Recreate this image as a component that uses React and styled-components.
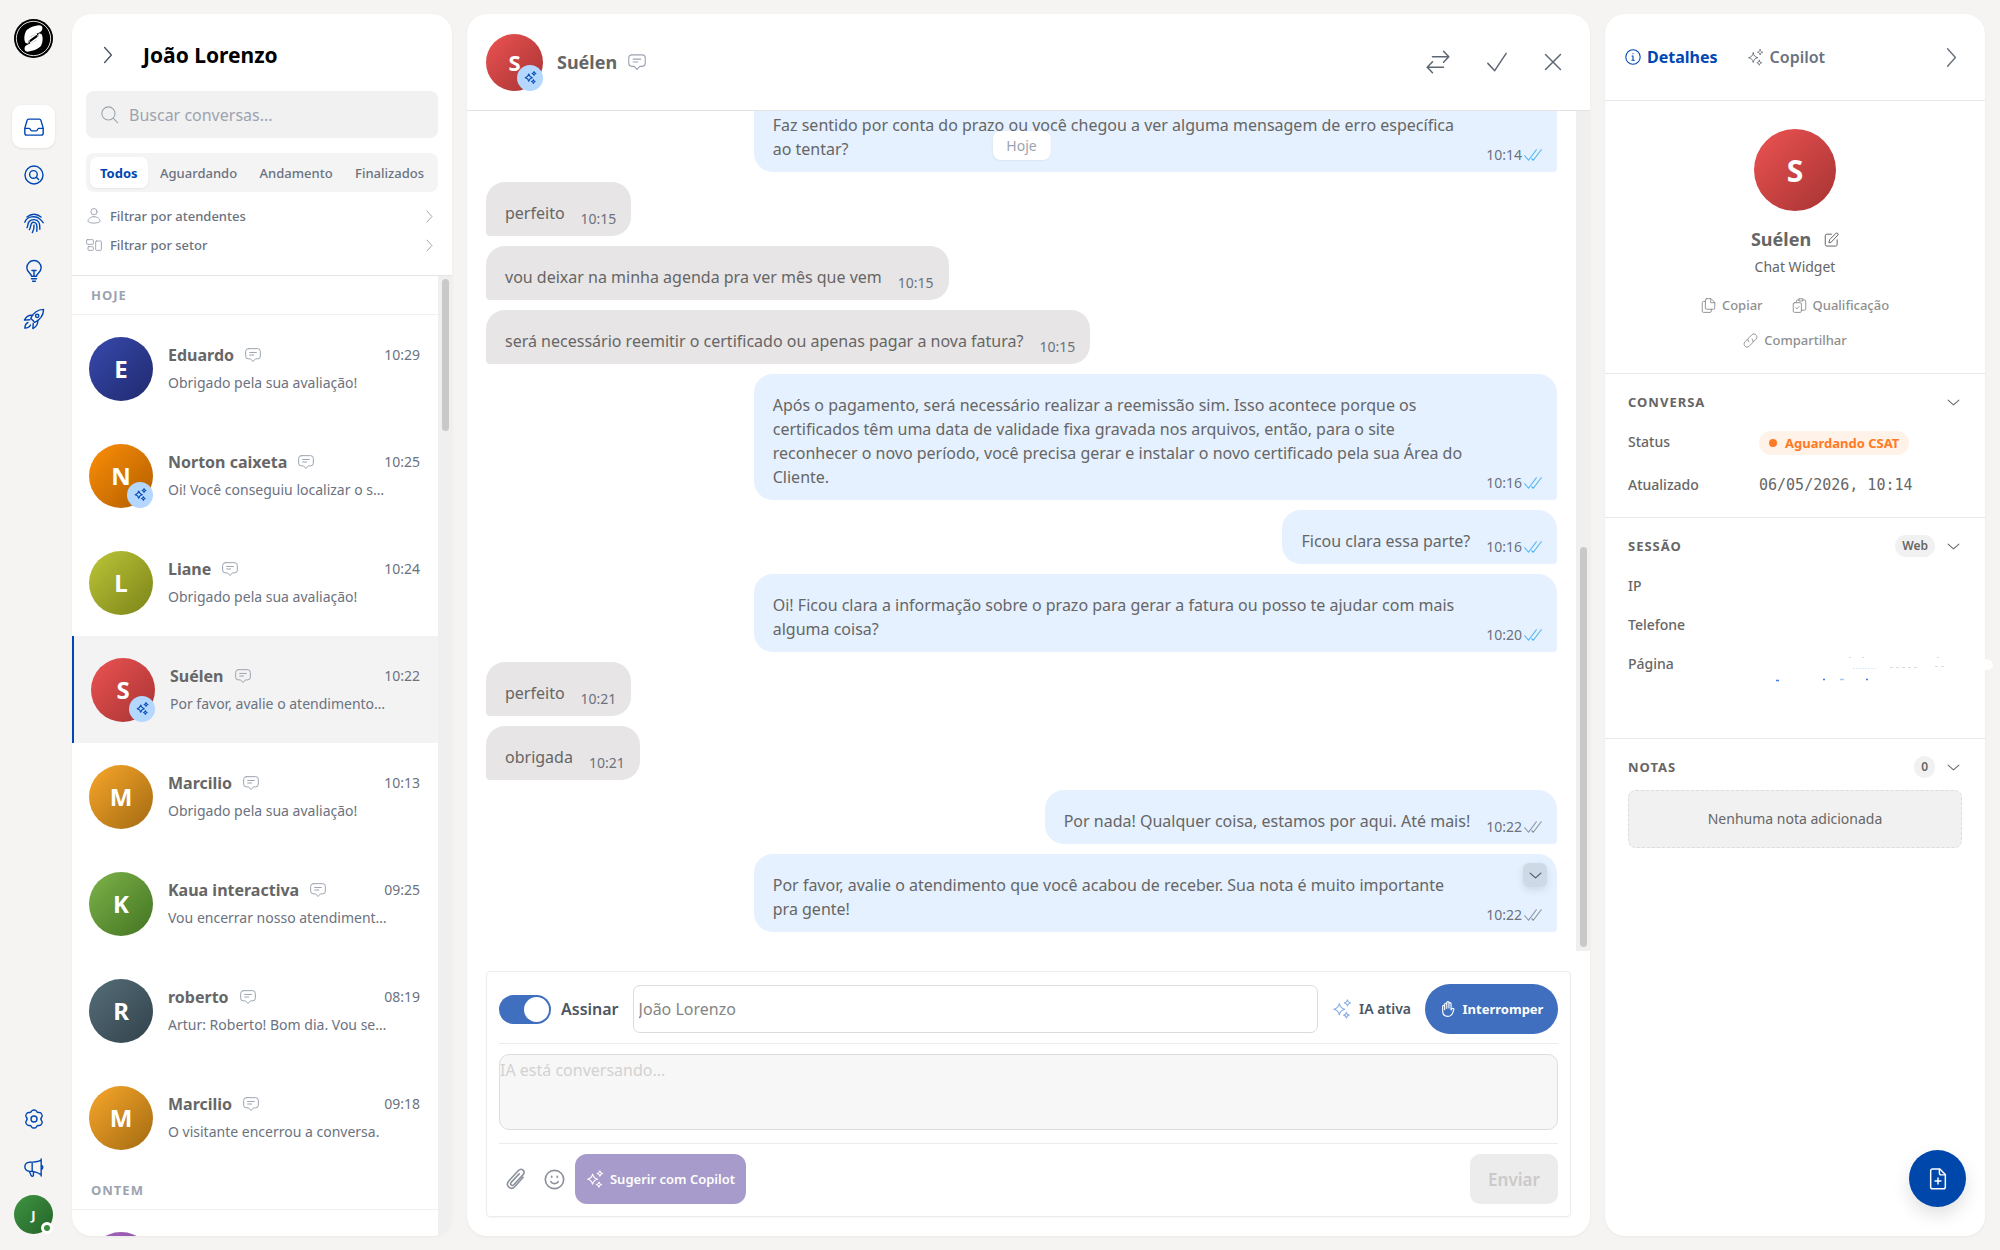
import React from "react";
import styled, { createGlobalStyle, css } from "styled-components";

const Global = createGlobalStyle`
  *, *::before, *::after { box-sizing: border-box; }
  body { margin: 0; background: #f5f4f2; }
  body, button, input, textarea {
    font-family: "Noto Sans", "Open Sans", "Liberation Sans", sans-serif;
  }
  button { border: 0; padding: 0; background: none; color: inherit; cursor: pointer; }
  h1, h2, h3, p, dl, dd, dt, ul { margin: 0; padding: 0; }
  ul { list-style: none; }
`;

/* ---------- icons ---------- */

const Svg = styled.svg`
  display: block;
  flex: none;
  width: ${(p) => p.$size}px;
  height: ${(p) => p.$size}px;
  fill: none;
  stroke: currentColor;
  stroke-width: ${(p) => p.$w};
  stroke-linecap: round;
  stroke-linejoin: round;
`;

const shapes = {
  inbox: (
    <>
      <path d="M5.6 2.500h12.800a2 2 0 0 1 1.900 1.500l2.700 9.300v6.200a2.200 2.200 0 0 1-2.200 2.200H3.200a2.200 2.200 0 0 1-2.200-2.200v-6.200L3.700 4a2 2 0 0 1 1.900-1.500z" />
      <path d="M1.300 13.600h5.200c1.200 0 1.200 3 2.800 3h5.400c1.600 0 1.600-3 2.800-3h5.200" />
    </>
  ),
  searchCircle: (
    <>
      <circle cx="12" cy="12" r="10.800" />
      <circle cx="11.300" cy="11.300" r="4.600" />
      <path d="m14.800 14.800 2.700 2.700" />
    </>
  ),
  finger: (
    <>
      <path d="M3.600 4.700C8.500.3 15.500.3 20.400 4.700" />
      <path d="M1 11C3.500 3.800 14 2.600 19 7.200c1.500 1.300 2.800 2.800 4 4.400" />
      <path d="M3.600 17.500c1.500-2.500.5-4.500 2.400-7 2.800-3.600 9.500-3.300 11.800.6 1.200 2.100 1.300 5 1.200 8.400" />
      <path d="M6.500 20c2-3 1-5.500 2.500-7.500s5-1.700 6 1c.7 2 .7 5.500.3 8.500" />
      <path d="M12 14.500c.3 3.500-.3 6-2 9" />
    </>
  ),
  bulb: (
    <>
      <path d="M9 18.200c0-3-5.600-4.500-5.600-10A8.500 8.500 0 0 1 12-.5a8.500 8.500 0 0 1 8.600 8.700c0 5.500-5.600 7-5.600 10z" />
      <path d="M9 21.200h6M10.300 24.200h3.400M12 18v-6M9.500 11.500h5" />
    </>
  ),
  rocket: (
    <>
      <path d="M23.500.500c-7 .2-12 3.500-15.500 10.700L12.800 16C20 12.500 23.300 7.500 23.500.500z" />
      <circle cx="15.800" cy="8.200" r="2" />
      <path d="M10.300 7.600C6 7 3 8.500.500 13.300l6.500-.4M16.400 13.700c.6 4.300-.9 7.300-5.700 9.800l.4-6.500" />
      <path d="M4.700 16.200C2.200 17.300 1.200 19.500 1 23c3.500-.2 5.700-1.200 6.800-3.700" />
    </>
  ),
  gear: (
    <>
      <circle cx="12" cy="12" r="3.600" />
      <path d="M12 1.200c1.200 0 2.400.3 2.800 1.300.5 1.200 1.400 2 3 1.700 1.800-.3 2.700.6 3.500 2.100.9 1.500.9 2.600-.1 3.600-1.100 1.200-1.100 3 0 4.200 1 1 1 2.100.1 3.600-.8 1.500-1.700 2.400-3.500 2.100-1.600-.3-2.500.5-3 1.700-.4 1-1.600 1.300-2.800 1.300s-2.400-.3-2.800-1.300c-.5-1.200-1.400-2-3-1.700-1.800.3-2.700-.6-3.500-2.100-.9-1.500-.9-2.600.1-3.600 1.100-1.200 1.100-3 0-4.200-1-1-1-2.100-.1-3.600.8-1.500 1.700-2.400 3.500-2.100 1.600.3 2.500-.5 3-1.700.4-1 1.600-1.300 2.800-1.300z" />
    </>
  ),
  megaphone: (
    <path d="M20.600 2.500c-4 2-7.600 2.600-14.200 2.600a5.300 5.300 0 0 0-5.400 5.400 5.300 5.300 0 0 0 5.400 5.300c6.600 0 10.200 1.500 14.200 4.400M20.600 1.200v20.400M20.600 8.500c2.600.4 2.600 4.800 0 5.300M9.800 5.200v10.600M6.400 15.800l2 5c.6 1.600 3.200 1.300 3-.6l-.3-4" />
  ),
  chevronRight: <path d="m7.500 2 9 10-9 10" />,
  chevronDown: <path d="m2 7.500 10 9 10-9" />,
  search: (
    <>
      <circle cx="10.500" cy="10.500" r="9.300" />
      <path d="m17.500 17.500 6 6" />
    </>
  ),
  person: (
    <>
      <circle cx="12" cy="5.500" r="4.700" />
      <path d="M12 13c5 0 9 2.900 9 6.600 0 4-18 4-18 0C3 15.900 7 13 12 13z" />
    </>
  ),
  sectors: (
    <>
      <rect x="1" y="4" width="10" height="7" rx="1" />
      <rect x="3" y="14.500" width="8" height="5.500" rx="1" />
      <rect x="14.500" y="6" width="8.500" height="14" rx="1" />
    </>
  ),
  chat: (
    <>
      <path d="M5 2.500h14a4 4 0 0 1 4 4v7.300a4 4 0 0 1-4 4h-3.300L12 21.800l-3.700-4H5a4 4 0 0 1-4-4V6.500a4 4 0 0 1 4-4z" />
      <path d="M7 8.200h10M7 12h6" />
    </>
  ),
  sparkles: (
    <>
      <path d="M8.800 5.500c.9 4.200 2.500 5.900 6.700 6.800-4.200.9-5.800 2.500-6.700 6.700-.9-4.200-2.500-5.800-6.700-6.700 4.200-.9 5.800-2.600 6.700-6.800z" />
      <path d="M18.500 1c.4 2.200 1.400 3.100 3.600 3.600-2.200.4-3.200 1.400-3.600 3.600-.4-2.200-1.400-3.200-3.600-3.600 2.200-.5 3.200-1.400 3.600-3.600zM17.300 16c.4 2.200 1.200 3 3.400 3.400-2.200.4-3 1.300-3.400 3.500-.4-2.200-1.200-3.100-3.400-3.500 2.200-.4 3-1.200 3.400-3.400z" />
    </>
  ),
  transfer: (
    <path d="M6.500 6.800h16.300M17.500 1.200l5.300 5.600-5.300 5.500M17.500 17.200H1.200M6.500 11.700l-5.300 5.500 5.300 5.600" />
  ),
  check: <path d="m2 13.500 7.500 8L22 2.500" />,
  close: <path d="m2 2 20 20M22 2 2 22" />,
  doubleCheck: <path d="m1 13 5 6L16.500 5M10.500 17l1.800 2L23 5" />,
  info: (
    <>
      <circle cx="12" cy="12" r="10.800" />
      <path d="M10.500 10.500H12v6.500M10.200 17h3.800M12 6.800v.4" />
    </>
  ),
  edit: (
    <>
      <path d="M12 3.500H4.500A2.500 2.500 0 0 0 2 6v14a2.500 2.500 0 0 0 2.500 2.500h14A2.500 2.500 0 0 0 21 20v-7.500" />
      <path d="M8 16.800l1-4.600L19.500 1.700c1.500-1 4 1.300 2.900 2.900L12.200 15.600z" />
    </>
  ),
  copy: (
    <>
      <path d="M9 1h7l6 6v9a2 2 0 0 1-2 2H9a2 2 0 0 1-2-2V3a2 2 0 0 1 2-2z" />
      <path d="M15.500 1v6.500H22M7 5.500H4a2 2 0 0 0-2 2V21a2 2 0 0 0 2 2h10.500a2 2 0 0 0 2-2v-3" />
    </>
  ),
  clipboard: (
    <>
      <path d="M4 7.500h9a2 2 0 0 1 2 2V21a2 2 0 0 1-2 2H4a2 2 0 0 1-2-2V9.500a2 2 0 0 1 2-2z" />
      <path d="M7 7.500V5a2 2 0 0 1 2-2h2.500M17.500 3H20a2 2 0 0 1 2 2v12.500a2 2 0 0 1-2 2h-5M11.500 1.200h6v3.600h-6zM5.800 15.500l2 2 3.600-4" />
    </>
  ),
  link: (
    <>
      <path d="M9.500 14.500C7 12 7.500 9.500 9.500 7.500l4.700-4.700c4-4 11 2 6.700 7l-4 4.100" />
      <path d="M14.500 9.500c2.500 2.500 2 5 0 7l-4.700 4.700c-4 4-11-2-6.700-7l4-4.100" />
    </>
  ),
  hand: (
    <path d="M7 13V5a1.600 1.600 0 0 1 3.200 0v6M10.200 10.500v-8a1.600 1.600 0 0 1 3.200 0v8M13.400 10.500V4a1.600 1.600 0 0 1 3.200 0v9.500l1.500-2c1-1.300 3.400-.3 2.700 1.500l-1.500 4c-1.200 3.700-3.500 6-7.500 6-5 0-7.800-3-7.800-8V8a1.500 1.500 0 0 1 3 0" />
  ),
  clip: (
    <path d="m19.800 10.200-9.300 10.200c-3.900 4.200-10.800-.8-6.400-6.200L14.600 2.800c3.300-3.400 8.400.7 5.200 4.400L9.600 18.200c-2 2-4.700-.4-2.900-2.500l8.800-9.300" />
  ),
  smile: (
    <>
      <circle cx="12" cy="12" r="10.500" />
      <path d="M7.800 14.500c1.600 3 6.800 3 8.400 0M8.800 8.400v1M15.200 8.400v1" />
    </>
  ),
  filePlus: (
    <>
      <path d="M6 1.200h8l6 6v13.500a2 2 0 0 1-2 2H6a2 2 0 0 1-2-2V3.200a2 2 0 0 1 2-2z" />
      <path d="M13.500 1.500v4a2 2 0 0 0 2 2H20M12 11v6.500M8.800 14.200h6.400" />
    </>
  ),
};

const Icon = ({ name, size = 20, w = 1.5 }) => (
  <Svg viewBox="0 0 24 24" $size={size} $w={w} overflow="visible" aria-hidden="true">
    {shapes[name]}
  </Svg>
);

const half =
  "M-8.500 4C-10 1-9.500-4-8-7-6-10.500 0-13 6-13.500 9.500-13.500 10-9.500 8-7.500 5-5.500 1-4-1.500-2.500-4.500-1-5 2-5 5-6.500 5.500-7.500 5-8.500 4z";

const Logo = () => (
  <svg width="39" height="39" viewBox="-20 -20 40 40" aria-label="Logo" role="img">
    <circle r="20" fill="#000" />
    <circle r="17.600" fill="none" stroke="#fff" strokeWidth="0.900" />
    <path d={half} fill="#fff" />
    <path d={half} fill="#fff" transform="rotate(180)" />
    <path d="M-4.500 2.500 4.500-2.500" stroke="#fff" strokeWidth="6" />
    <path d="M-3 2.200 3-2.200" stroke="#000" strokeWidth="2.400" strokeLinecap="round" />
  </svg>
);

/* ---------- shared parts ---------- */

const Shell = styled.div`
  display: flex;
  gap: 15px;
  height: 100vh;
  padding: 14px 15px 14px 0;
  overflow: hidden;
  color: #666;
  background: #f5f4f2;
`;

const panel = css`
  display: flex;
  flex-direction: column;
  min-width: 0;
  overflow: hidden;
  background: #fff;
  border-radius: 20px;
  box-shadow: 0 1px 3px rgba(0, 0, 0, 0.05);
`;

const Avatar = styled.span`
  position: relative;
  display: flex;
  flex: none;
  align-items: center;
  justify-content: center;
  width: ${(p) => p.$size}px;
  height: ${(p) => p.$size}px;
  border-radius: 50%;
  background: linear-gradient(135deg, ${(p) => p.$from} 10%, ${(p) => p.$to} 90%);
  color: #fff;
  font-size: ${(p) => p.$font}px;
  font-weight: 700;
`;

const AiBadge = styled.span`
  position: absolute;
  right: 0;
  bottom: 0;
  display: flex;
  align-items: center;
  justify-content: center;
  width: 26px;
  height: 26px;
  border-radius: 50%;
  background: #b3d7ff;
  color: #0b4fb5;
`;

const Scroller = styled.div`
  display: flex;
  flex: 1;
  min-height: 0;
`;

const ScrollTrack = styled.div`
  flex: none;
  width: 14px;
  padding: 3px 3px 4px 4px;
  background: #efefef;
  display: flex;
  flex-direction: column;
  justify-content: ${(p) => (p.$end ? "flex-end" : "flex-start")};
`;

const ScrollThumb = styled.div`
  height: ${(p) => p.$h}%;
  border-radius: 4px;
  background: #c9c9c9;
`;

/* ---------- navigation rail ---------- */

const Rail = styled.nav`
  display: flex;
  flex: none;
  flex-direction: column;
  align-items: center;
  justify-content: space-between;
  width: 57px;
  padding: 5px 0 2px 10px;
`;

const RailGroup = styled.div`
  display: flex;
  flex-direction: column;
  align-items: center;
  gap: ${(p) => p.$gap}px;
`;

const RailLogo = styled.a`
  display: flex;
  margin-bottom: 42px;
`;

const RailButton = styled.button`
  display: flex;
  align-items: center;
  justify-content: center;
  width: 43px;
  height: 43px;
  border-radius: 10px;
  color: #0047b3;
  ${(p) => p.$active && css`
    background: #fff;
    box-shadow: 0 1px 3px rgba(0, 0, 0, 0.08);
  `}
`;

const OnlineDot = styled.span`
  position: absolute;
  right: 0;
  bottom: 0;
  width: 12px;
  height: 12px;
  border: 3px solid #fff;
  border-radius: 50%;
  background: #388e3c;
`;

/* ---------- conversation list ---------- */

const ListPanel = styled.section`
  ${panel}
  flex: none;
  width: 380px;
`;

const ListHead = styled.header`
  display: flex;
  flex-direction: column;
  padding: 24px 14px 20px;
  border-bottom: 1px solid #e5e5e5;
`;

const Owner = styled.div`
  display: flex;
  align-items: center;
  gap: 26px;
  height: 34px;
  padding-left: 13px;
  color: #4b5563;
`;

const OwnerName = styled.h1`
  color: #000;
  font-size: 21px;
  line-height: 34px;
  font-weight: 700;
`;

const SearchBox = styled.label`
  display: flex;
  align-items: center;
  gap: 9px;
  height: 47px;
  margin: 19px 0 15px;
  padding: 0 15px;
  border-radius: 8px;
  background: #f1f1f1;
  color: #9ca3af;
`;

const SearchInput = styled.input`
  flex: 1;
  min-width: 0;
  border: 0;
  outline: 0;
  background: none;
  font-size: 16px;
  line-height: 24px;
  &::placeholder { color: #9ca3af; opacity: 1; }
`;

const Tabs = styled.div`
  display: flex;
  justify-content: space-between;
  height: 39px;
  padding: 4px;
  border-radius: 8px;
  background: #f4f4f4;
`;

const Tab = styled.button`
  padding: 0 10px;
  border-radius: 7px;
  font-size: 13px;
  line-height: 20px;
  font-weight: 500;
  color: #6b7280;
  ${(p) => p.$active && css`
    background: #fff;
    color: #0047b3;
    font-weight: 700;
    box-shadow: 0 1px 2px rgba(0, 0, 0, 0.06);
  `}
`;

const Filters = styled.div`
  display: flex;
  flex-direction: column;
  gap: 9px;
  margin-top: 14px;
`;

const Filter = styled.button`
  display: flex;
  align-items: center;
  gap: 8px;
  height: 20px;
  padding-right: 2px;
  color: #9ca3af;
  font-size: 13px;
  line-height: 20px;
  font-weight: 500;
  span { flex: 1; text-align: left; color: #6b7280; }
`;

const ListBody = styled.div`
  flex: 1;
  min-width: 0;
  overflow: hidden;
`;

const DayTitle = styled.h2`
  height: 39px;
  padding-left: 19px;
  border-bottom: 1px solid #f0f0f0;
  color: #9ca3af;
  font-size: 13px;
  line-height: 38px;
  font-weight: 700;
  letter-spacing: 1px;
`;

const Row = styled.a`
  display: flex;
  align-items: center;
  gap: 15px;
  height: 107px;
  padding: 0 18px 0 17px;
  color: #6b7280;
  text-decoration: none;
  ${(p) => p.$active && css`
    border-left: 2px solid #0047b3;
    background: #f3f3f3;
  `}
`;

const RowBody = styled.span`
  display: flex;
  flex: 1;
  flex-direction: column;
  gap: 6px;
  min-width: 0;
`;

const RowTop = styled.span`
  display: flex;
  align-items: center;
  gap: 11px;
  line-height: 22px;
  color: #9ca3af;
`;

const RowName = styled.strong`
  color: #666;
  font-size: 16px;
  font-weight: 700;
`;

const RowTime = styled.time`
  margin-left: auto;
  color: #6b7280;
  font-size: 14px;
`;

const Preview = styled.span`
  overflow: hidden;
  font-size: 14px;
  line-height: 22px;
  white-space: nowrap;
`;

/* ---------- chat ---------- */

const ChatPanel = styled.main`
  ${panel}
  flex: 1;
`;

const ChatHead = styled.header`
  display: flex;
  flex: none;
  align-items: center;
  gap: 14px;
  height: 97px;
  padding: 0 28px 0 19px;
  border-bottom: 1px solid #e3e3e3;
`;

const Contact = styled.h2`
  display: flex;
  align-items: center;
  gap: 11px;
  color: #666;
  font-size: 18px;
  line-height: 26px;
  font-weight: 700;
  svg { color: #9ca3af; }
`;

const HeadActions = styled.div`
  display: flex;
  align-items: center;
  gap: 36px;
  margin-left: auto;
  color: #5d6673;
`;

const Messages = styled.div`
  position: relative;
  display: flex;
  flex: 1;
  flex-direction: column;
  justify-content: flex-end;
  gap: 10px;
  min-width: 0;
  padding: 0 19px 19px;
  overflow: hidden;
`;

const Bubble = styled.article`
  position: relative;
  display: flex;
  flex: none;
  align-items: flex-end;
  align-self: ${(p) => (p.$out ? "flex-end" : "flex-start")};
  gap: 16px;
  max-width: 75%;
  padding: 19px 15px 8px 19px;
  border-radius: ${(p) => (p.$out ? "19px 19px 4px 19px" : "19px 19px 19px 4px")};
  background: ${(p) => (p.$out ? "#e5f1ff" : "#e7e5e5")};
`;

const BubbleText = styled.p`
  flex: 1;
  margin-bottom: 3px;
  color: #666;
  font-size: 16px;
  line-height: 24px;
`;

const BubbleMeta = styled.span`
  display: flex;
  align-items: center;
  gap: 2px;
  color: #6b7280;
  font-size: 14px;
  line-height: 18px;
  svg { color: ${(p) => (p.$read ? "#4db6f0" : "#8a93a3")}; }
`;

const BubbleMenu = styled.button`
  position: absolute;
  top: 9px;
  right: 10px;
  display: flex;
  align-items: center;
  justify-content: center;
  width: 24px;
  height: 24px;
  border-radius: 6px;
  background: #cddae6;
  color: #4b5563;
  box-shadow: 0 3px 8px rgba(0, 0, 0, 0.1);
`;

const DayPill = styled.span`
  position: absolute;
  top: 20px;
  left: 50%;
  transform: translateX(-50%);
  padding: 4px 14px;
  border-radius: 8px;
  background: #fff;
  color: #9ca3af;
  font-size: 14px;
  line-height: 21px;
  box-shadow: 0 1px 2px rgba(0, 0, 0, 0.05);
`;

const ComposerWrap = styled.div`
  flex: none;
  padding: 20px 19px 19px;
`;

const Composer = styled.form`
  display: flex;
  flex-direction: column;
  padding: 12px;
  border: 1px solid #ececec;
  border-radius: 4px;
  box-shadow: 0 1px 2px rgba(0, 0, 0, 0.04);
`;

const SignRow = styled.div`
  display: flex;
  align-items: center;
  padding-bottom: 9px;
  border-bottom: 1px solid #ececec;
`;

const SignLabel = styled.label`
  display: flex;
  align-items: center;
  gap: 10px;
  color: #4b5563;
  font-size: 16px;
  line-height: 24px;
  font-weight: 600;
`;

const Toggle = styled.input`
  appearance: none;
  display: flex;
  align-items: center;
  justify-content: flex-end;
  width: 52px;
  height: 29px;
  margin: 0;
  padding: 2px;
  border-radius: 15px;
  background: #3f6fbe;
  &::before {
    content: "";
    width: 25px;
    height: 25px;
    border-radius: 50%;
    background: #fff;
  }
`;

const SignInput = styled.input`
  flex: 1;
  min-width: 0;
  height: 48px;
  margin: 0 14px;
  padding: 0 5px;
  border: 1px solid #dcdcdc;
  border-radius: 7px;
  color: #858585;
  font-size: 16px;
`;

const AiState = styled.span`
  display: flex;
  align-items: center;
  gap: 7px;
  margin-right: 14px;
  color: #4b5563;
  font-size: 14px;
  line-height: 20px;
  font-weight: 600;
  svg { color: #8fb1e6; }
`;

const StopButton = styled.button`
  display: flex;
  align-items: center;
  justify-content: center;
  gap: 7px;
  width: 133px;
  height: 50px;
  border-radius: 25px;
  background: #3f6fbe;
  color: #fff;
  font-size: 13px;
  line-height: 20px;
  font-weight: 700;
`;

const Draft = styled.textarea`
  display: block;
  height: 76px;
  margin: 10px 0 13px;
  padding: 4px 0;
  resize: none;
  border: 1px solid #dcdcdc;
  border-radius: 10px;
  background: #f7f7f7;
  font-size: 16px;
  line-height: 22px;
  &::placeholder { color: #d2d2d2; opacity: 1; }
`;

const SendRow = styled.div`
  display: flex;
  align-items: center;
  gap: 4px;
  padding-top: 10px;
  border-top: 1px solid #ececec;
`;

const ToolButton = styled.button`
  display: flex;
  align-items: center;
  justify-content: center;
  width: 34px;
  height: 34px;
  color: #8b919b;
`;

const SuggestButton = styled.button`
  display: flex;
  align-items: center;
  justify-content: center;
  gap: 6px;
  width: 171px;
  height: 50px;
  border-radius: 12px;
  background: #a69bcb;
  color: #fff;
  font-size: 13px;
  line-height: 20px;
  font-weight: 600;
`;

const SendButton = styled.button`
  width: 88px;
  height: 50px;
  margin-left: auto;
  border-radius: 10px;
  background: #ececec;
  color: #cacaca;
  font-size: 17px;
  font-weight: 600;
`;

/* ---------- details ---------- */

const DetailsPanel = styled.aside`
  ${panel}
  flex: none;
  width: 380px;
  overflow: visible;
`;

const DetailsHead = styled.header`
  display: flex;
  flex: none;
  align-items: center;
  gap: 29px;
  height: 87px;
  padding: 0 23px 0 20px;
  border-bottom: 1px solid #e5e7eb;
  color: #6b7280;
`;

const DetailsTab = styled.button`
  display: flex;
  align-items: center;
  gap: 6px;
  color: ${(p) => (p.$active ? "#0047b3" : "#6b7280")};
  font-size: 16px;
  line-height: 24px;
  font-weight: ${(p) => (p.$active ? 700 : 600)};
`;

const Collapse = styled.button`
  margin-left: auto;
`;

const Profile = styled.div`
  display: flex;
  flex-direction: column;
  align-items: center;
  padding: 28px 60px 23px;
  border-bottom: 1px solid #e8e8e8;
`;

const ProfileName = styled.h2`
  display: flex;
  align-items: center;
  gap: 13px;
  margin-top: 16px;
  color: #666;
  font-size: 18px;
  line-height: 24px;
  font-weight: 700;
`;

const Channel = styled.p`
  margin-top: 6px;
  font-size: 14px;
  line-height: 20px;
`;

const ProfileActions = styled.div`
  display: flex;
  flex-wrap: wrap;
  justify-content: center;
  gap: 15px 29px;
  margin-top: 18px;
`;

const ProfileAction = styled.button`
  display: flex;
  align-items: center;
  gap: 6px;
  color: #8f8f8f;
  font-size: 13px;
  line-height: 20px;
  font-weight: 500;
`;

const Section = styled.section`
  padding: 17px 23px 20px;
  border-bottom: ${(p) => (p.$last ? "0" : "1px solid #e8e8e8")};
`;

const SectionHead = styled.div`
  display: flex;
  align-items: center;
  gap: 12px;
  height: 22px;
  padding-right: 2px;
`;

const SectionTitle = styled.h3`
  flex: 1;
  font-size: 13px;
  line-height: 20px;
  font-weight: 700;
  letter-spacing: 1px;
`;

const Tag = styled.span`
  padding: 0 7px;
  border-radius: 11px;
  background: #f1f1f1;
  font-size: 12px;
  line-height: 22px;
  font-weight: 600;
`;

const Facts = styled.dl`
  display: flex;
  flex-direction: column;
  gap: ${(p) => p.$gap}px;
  margin-top: 17px;
`;

const Fact = styled.div`
  display: flex;
  min-height: ${(p) => p.$min || 24}px;
  font-size: 14px;
  line-height: 24px;
  dt { flex: none; width: 131px; font-weight: 500; }
  dd { flex: 1; }
`;

const Status = styled.span`
  display: inline-flex;
  align-items: center;
  gap: 8px;
  padding: 0 10px;
  border-radius: 12px;
  background: #fff2e8;
  color: #ff7a24;
  font-size: 13px;
  line-height: 24px;
  font-weight: 700;
  &::before {
    content: "";
    width: 8px;
    height: 8px;
    border-radius: 50%;
    background: currentColor;
  }
`;

const Stamp = styled.time`
  font-family: "DejaVu Sans Mono", "Liberation Mono", monospace;
  font-size: 15px;
`;

const EmptyNotes = styled.p`
  margin-top: 12px;
  padding: 17px;
  border: 1px dashed #dcdcdc;
  border-radius: 8px;
  background: #f1f1f1;
  font-size: 14px;
  line-height: 22px;
  text-align: center;
`;

const Fab = styled.button`
  position: fixed;
  right: 34px;
  bottom: 43px;
  display: flex;
  align-items: center;
  justify-content: center;
  width: 57px;
  height: 57px;
  border-radius: 50%;
  background: #0047ab;
  color: #fff;
  box-shadow: 0 8px 18px rgba(0, 0, 0, 0.12);
`;

/* ---------- data ---------- */

const red = ["#e5504f", "#ad3636"];
const amber = ["#f0a128", "#ab7014"];

const today = [
  { name: "Eduardo", text: "Obrigado pela sua avaliação!", time: "10:29", c: ["#3546a6", "#222d75"] },
  { name: "Norton caixeta", text: "Oi! Você conseguiu localizar o s…", time: "10:25", c: ["#f58a07", "#b86200"], ai: true },
  { name: "Liane", text: "Obrigado pela sua avaliação!", time: "10:24", c: ["#b6bf34", "#828a1c"] },
  { name: "Suélen", text: "Por favor, avalie o atendimento…", time: "10:22", c: red, ai: true, active: true },
  { name: "Marcilio", text: "Obrigado pela sua avaliação!", time: "10:13", c: amber },
  { name: "Kaua interactiva", text: "Vou encerrar nosso atendiment…", time: "09:25", c: ["#77ad46", "#497a26"] },
  { name: "roberto", text: "Artur: Roberto! Bom dia. Vou se…", time: "08:19", c: ["#526974", "#354750"] },
  { name: "Marcilio", text: "O visitante encerrou a conversa.", time: "09:18", c: amber },
];

const yesterday = [{ name: "", text: "", time: "", c: ["#a564bd", "#7b3f94"] }];

const messages = [
  { out: true, read: true, time: "10:14", text: "Faz sentido por conta do prazo ou você chegou a ver alguma mensagem de erro específica ao tentar?" },
  { time: "10:15", text: "perfeito" },
  { time: "10:15", text: "vou deixar na minha agenda pra ver mês que vem" },
  { time: "10:15", text: "será necessário reemitir o certificado ou apenas pagar a nova fatura?" },
  { out: true, read: true, time: "10:16", text: "Após o pagamento, será necessário realizar a reemissão sim. Isso acontece porque os certificados têm uma data de validade fixa gravada nos arquivos, então, para o site reconhecer o novo período, você precisa gerar e instalar o novo certificado pela sua Área do Cliente." },
  { out: true, read: true, time: "10:16", text: "Ficou clara essa parte?" },
  { out: true, read: true, time: "10:20", text: "Oi! Ficou clara a informação sobre o prazo para gerar a fatura ou posso te ajudar com mais alguma coisa?" },
  { time: "10:21", text: "perfeito" },
  { time: "10:21", text: "obrigada" },
  { out: true, time: "10:22", text: "Por nada! Qualquer coisa, estamos por aqui. Até mais!" },
  { out: true, time: "10:22", menu: true, text: "Por favor, avalie o atendimento que você acabou de receber. Sua nota é muito importante pra gente!" },
];

const nav = [
  ["inbox", "Conversas"],
  ["searchCircle", "Buscar"],
  ["finger", "Visitantes"],
  ["bulb", "Ideias"],
  ["rocket", "Campanhas"],
];

/* ---------- views ---------- */

const Conversation = ({ item }) => (
  <li>
    <Row href="#" $active={item.active}>
      <Avatar $size={64} $font={24} $from={item.c[0]} $to={item.c[1]}>
        {item.name.charAt(0).toUpperCase()}
        {item.ai && <AiBadge><Icon name="sparkles" size={13} w={2} /></AiBadge>}
      </Avatar>
      <RowBody>
        <RowTop>
          <RowName>{item.name}</RowName>
          <Icon name="chat" size={16} w={1.5} />
          <RowTime>{item.time}</RowTime>
        </RowTop>
        <Preview>{item.text}</Preview>
      </RowBody>
    </Row>
  </li>
);

const Message = ({ m }) => (
  <Bubble $out={m.out}>
    <BubbleText>{m.text}</BubbleText>
    <BubbleMeta $read={m.read}>
      <time>{m.time}</time>
      {m.out && <Icon name="doubleCheck" size={18} w={1.5} />}
    </BubbleMeta>
    {m.menu && (
      <BubbleMenu type="button" aria-label="Opções da mensagem">
        <Icon name="chevronDown" size={13} w={2} />
      </BubbleMenu>
    )}
  </Bubble>
);

const PageTrace = () => (
  <svg width="235" height="58" viewBox="0 0 235 58" overflow="visible" aria-hidden="true">
    <path d="M226 7q8 1 8 6t-8 5z" fill="#fff" />
    <path d="M17 28.500h3M64 27.500h2M107 27.500h2" stroke="#3f7be0" strokeWidth="1.500" />
    <path d="M81 27.500h4" stroke="#a9c4f0" strokeWidth="1.500" />
    <path d="M94 16.500h24" stroke="#dfeafb" strokeDasharray="2 1" />
    <path d="M131 15.500h30M90 5.500h2M103 5.500h2M178 5.500h2M176 14.500h10" stroke="#dcdcdc" strokeDasharray="3 3" />
  </svg>
);

export default function App() {
  return (
    <>
      <Global />
      <Shell>
        <Rail aria-label="Principal">
          <RailGroup $gap={5}>
            <RailLogo href="#"><Logo /></RailLogo>
            {nav.map(([icon, label], i) => (
              <RailButton key={icon} type="button" aria-label={label} $active={i === 0}>
                <Icon name={icon} size={20} w={1.7} />
              </RailButton>
            ))}
          </RailGroup>
          <RailGroup $gap={6}>
            <RailButton type="button" aria-label="Configurações"><Icon name="gear" size={20} w={1.7} /></RailButton>
            <RailButton type="button" aria-label="Novidades"><Icon name="megaphone" size={20} w={1.7} /></RailButton>
            <Avatar as="button" type="button" $size={39} $font={13} $from="#3c8f40" $to="#27682b">
              J<OnlineDot />
            </Avatar>
          </RailGroup>
        </Rail>

        <ListPanel>
          <ListHead>
            <Owner>
              <button type="button" aria-label="Expandir"><Icon name="chevronRight" size={18} w={1.8} /></button>
              <OwnerName>João Lorenzo</OwnerName>
            </Owner>
            <SearchBox>
              <Icon name="search" size={17} w={1.5} />
              <SearchInput type="search" placeholder="Buscar conversas..." aria-label="Buscar conversas" />
            </SearchBox>
            <Tabs>
              {["Todos", "Aguardando", "Andamento", "Finalizados"].map((t, i) => (
                <Tab key={t} type="button" $active={i === 0}>{t}</Tab>
              ))}
            </Tabs>
            <Filters>
              <Filter type="button">
                <Icon name="person" size={16} w={1.4} />
                <span>Filtrar por atendentes</span>
                <Icon name="chevronRight" size={13} w={1.8} />
              </Filter>
              <Filter type="button">
                <Icon name="sectors" size={16} w={1.4} />
                <span>Filtrar por setor</span>
                <Icon name="chevronRight" size={13} w={1.8} />
              </Filter>
            </Filters>
          </ListHead>
          <Scroller>
            <ListBody>
              <DayTitle>HOJE</DayTitle>
              <ul>{today.map((item, i) => <Conversation key={i} item={item} />)}</ul>
              <DayTitle>ONTEM</DayTitle>
              <ul>{yesterday.map((item, i) => <Conversation key={i} item={item} />)}</ul>
            </ListBody>
            <ScrollTrack><ScrollThumb $h={16} /></ScrollTrack>
          </Scroller>
        </ListPanel>

        <ChatPanel>
          <ChatHead>
            <Avatar $size={57} $font={22} $from={red[0]} $to={red[1]}>
              S
              <AiBadge><Icon name="sparkles" size={13} w={2} /></AiBadge>
            </Avatar>
            <Contact>Suélen <Icon name="chat" size={18} w={1.5} /></Contact>
            <HeadActions>
              <button type="button" aria-label="Transferir"><Icon name="transfer" size={24} w={1.5} /></button>
              <button type="button" aria-label="Finalizar"><Icon name="check" size={22} w={1.6} /></button>
              <button type="button" aria-label="Fechar"><Icon name="close" size={18} w={1.9} /></button>
            </HeadActions>
          </ChatHead>
          <Scroller>
            <Messages>
              {messages.map((m, i) => <Message key={i} m={m} />)}
              <DayPill>Hoje</DayPill>
            </Messages>
            <ScrollTrack $end><ScrollThumb $h={48} /></ScrollTrack>
          </Scroller>
          <ComposerWrap>
            <Composer>
              <SignRow>
                <SignLabel>
                  <Toggle type="checkbox" role="switch" defaultChecked />
                  Assinar
                </SignLabel>
                <SignInput type="text" defaultValue="João Lorenzo" aria-label="Nome da assinatura" />
                <AiState><Icon name="sparkles" size={20} w={1.4} />IA ativa</AiState>
                <StopButton type="button"><Icon name="hand" size={16} w={1.7} />Interromper</StopButton>
              </SignRow>
              <Draft placeholder="IA está conversando..." aria-label="Mensagem" disabled />
              <SendRow>
                <ToolButton type="button" aria-label="Anexar"><Icon name="clip" size={22} w={1.7} /></ToolButton>
                <ToolButton type="button" aria-label="Emoji"><Icon name="smile" size={21} w={1.9} /></ToolButton>
                <SuggestButton type="button"><Icon name="sparkles" size={18} w={1.5} />Sugerir com Copilot</SuggestButton>
                <SendButton type="button" disabled>Enviar</SendButton>
              </SendRow>
            </Composer>
          </ComposerWrap>
        </ChatPanel>

        <DetailsPanel>
          <DetailsHead>
            <DetailsTab type="button" $active><Icon name="info" size={16} w={1.6} />Detalhes</DetailsTab>
            <DetailsTab type="button"><Icon name="sparkles" size={17} w={1.4} />Copilot</DetailsTab>
            <Collapse type="button" aria-label="Recolher"><Icon name="chevronRight" size={21} w={1.7} /></Collapse>
          </DetailsHead>
          <Profile>
            <Avatar $size={82} $font={30} $from={red[0]} $to={red[1]}>S</Avatar>
            <ProfileName>
              Suélen
              <button type="button" aria-label="Editar nome"><Icon name="edit" size={15} w={1.6} /></button>
            </ProfileName>
            <Channel>Chat Widget</Channel>
            <ProfileActions>
              <ProfileAction type="button"><Icon name="copy" size={15} w={1.5} />Copiar</ProfileAction>
              <ProfileAction type="button"><Icon name="clipboard" size={15} w={1.5} />Qualificação</ProfileAction>
              <ProfileAction type="button"><Icon name="link" size={15} w={1.5} />Compartilhar</ProfileAction>
            </ProfileActions>
          </Profile>
          <Section>
            <SectionHead>
              <SectionTitle>CONVERSA</SectionTitle>
              <button type="button" aria-label="Recolher conversa"><Icon name="chevronDown" size={13} w={1.9} /></button>
            </SectionHead>
            <Facts $gap={18}>
              <Fact><dt>Status</dt><dd><Status>Aguardando CSAT</Status></dd></Fact>
              <Fact><dt>Atualizado</dt><dd><Stamp>06/05/2026, 10:14</Stamp></dd></Fact>
            </Facts>
          </Section>
          <Section>
            <SectionHead>
              <SectionTitle>SESSÃO</SectionTitle>
              <Tag>Web</Tag>
              <button type="button" aria-label="Recolher sessão"><Icon name="chevronDown" size={13} w={1.9} /></button>
            </SectionHead>
            <Facts $gap={15}>
              <Fact><dt>IP</dt><dd /></Fact>
              <Fact><dt>Telefone</dt><dd /></Fact>
              <Fact $min={66}><dt>Página</dt><dd><PageTrace /></dd></Fact>
            </Facts>
          </Section>
          <Section $last>
            <SectionHead>
              <SectionTitle>NOTAS</SectionTitle>
              <Tag>0</Tag>
              <button type="button" aria-label="Recolher notas"><Icon name="chevronDown" size={13} w={1.9} /></button>
            </SectionHead>
            <EmptyNotes>Nenhuma nota adicionada</EmptyNotes>
          </Section>
        </DetailsPanel>
        <Fab type="button" aria-label="Nova nota"><Icon name="filePlus" size={22} w={1.6} /></Fab>
      </Shell>
    </>
  );
}
